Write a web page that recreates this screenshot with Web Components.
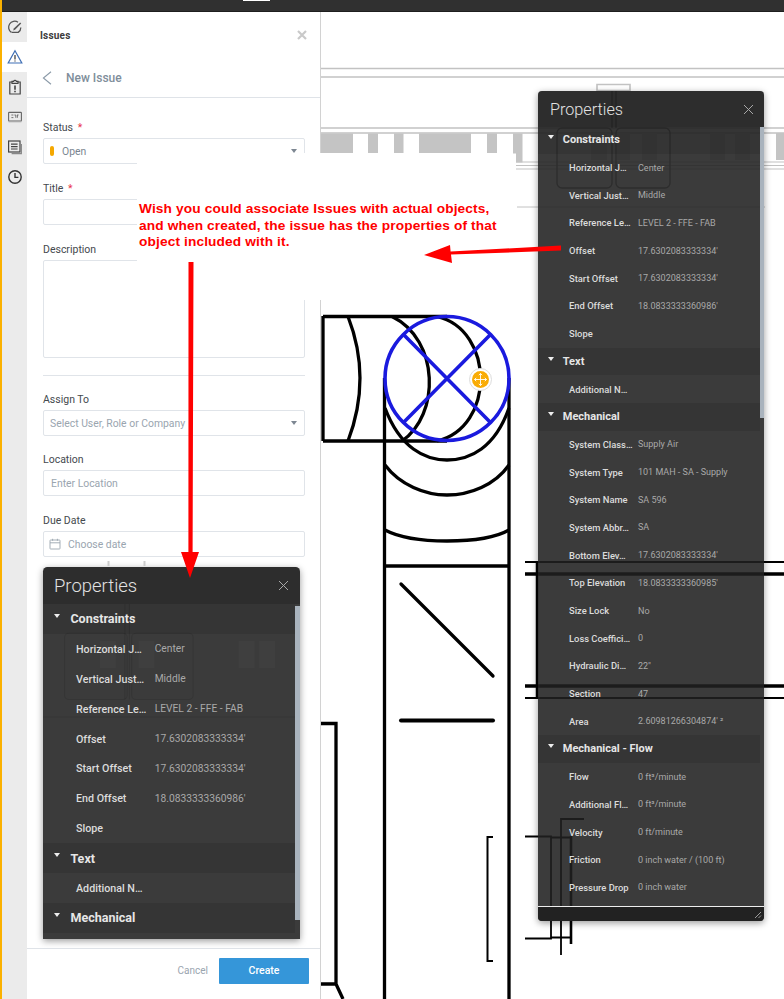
<!DOCTYPE html>
<html>
<head>
<meta charset="utf-8">
<title>Issues</title>
<style>
  html, body { margin: 0; padding: 0; background: #fff; }
  body { font-family: Roboto, "Liberation Sans", sans-serif; }
  #rightProps { left: 538px; top: 91px; width: 226px; height: 830px; font-size: 10px; --rowh: 27.7px; --headh: 36px; --shift: -1px; --rowpad: 31px; --headpad: 12px; }
  #leftProps { left: 43px; top: 567px; width: 257px; height: 372px; font-size: 11.4px; --rowh: 29.9px; --headh: 37px; --shift: 0px; --rowpad: 33px; --headpad: 11px; }
  #note { left: 137px; top: 153px; width: 376px; height: 147px; }
  #arrows { position: absolute; left: 0; top: 0; }
</style>
</head>
<body>

<viewer-shell>
  <side-rail slot="rail">
    <rail-icon>
      <svg viewBox="0 0 16 16" width="16" height="16" fill="none" stroke="#555" stroke-width="1.3"><path d="M4.4 13.4A6 6 0 1 1 11 3.2"/><path d="M4.6 13.4h6.6a6 6 0 0 0 2.6-5"/><path d="M6.8 9.6l6.4-6.2 1 1-6.2 6.4-1.8.6z" fill="#555" stroke="none"/></svg>
    </rail-icon>
    <rail-icon active>
      <svg viewBox="0 0 16 16" width="16" height="16" fill="none" stroke="#3f6fb5" stroke-width="1.2"><path d="M8 1.8L14.8 14H1.2z"/><path d="M8 6v4.4M8 11.4v1.2" stroke="#333"/></svg>
    </rail-icon>
    <rail-icon>
      <svg viewBox="0 0 16 16" width="16" height="16" fill="none" stroke="#444" stroke-width="1.2"><path d="M5 3H2.800v12h10.400V3H11"/><path d="M5 4.400V2.400h1.600a1.500 1.500 0 0 1 2.800 0H11v2z"/><path d="M8 6.400v4.400M8 11.800v1.400" stroke-width="1.600"/></svg>
    </rail-icon>
    <rail-icon>
      <svg viewBox="0 0 16 16" width="16" height="16" fill="none" stroke="#666" stroke-width="1.1"><rect x="1.600" y="3.400" width="12.800" height="8.600" rx=".6"/><path d="M1.600 12.600h12.800" stroke="#aaa" stroke-width="1.400"/><path d="M4.400 6h2M4.400 8.600h2M7.400 6h1.400v2.800M10.400 6v2.800M10 6h1.600" stroke-width=".9"/></svg>
    </rail-icon>
    <rail-icon>
      <svg viewBox="0 0 16 16" width="16" height="16" fill="none" stroke="#444" stroke-width="1.2"><rect x="1.600" y="2" width="11.400" height="11"/><path d="M4 5.200h6.600M4 7.600h6.600M4 10h6.600"/><path d="M14.400 5v9.600H4.600" stroke="#888" stroke-width="1.1"/></svg>
    </rail-icon>
    <rail-icon>
      <svg viewBox="0 0 16 16" width="16" height="16" fill="none" stroke="#333" stroke-width="1.4"><circle cx="8" cy="8" r="6.2"/><path d="M8 4v4.400h3.400"/></svg>
    </rail-icon>
  </side-rail>

  <issues-panel slot="panel">
    <form-field label="Status" required>
      <select-box><i class="dot" slot="lead"></i><span>Open</span></select-box>
    </form-field>
    <form-field label="Title" required><text-box></text-box></form-field>
    <form-field label="Description"><text-box tall></text-box></form-field>
    <hr-line></hr-line>
    <form-field label="Assign To" style="margin-bottom:16px">
      <select-box placeholder><span>Select User, Role or Company</span></select-box>
    </form-field>
    <form-field label="Location" style="margin-bottom:17px"><text-box>Enter Location</text-box></form-field>
    <form-field label="Due Date"><text-box calendar style="margin-top:1px">Choose date</text-box></form-field>
  </issues-panel>

  <cad-canvas slot="canvas"></cad-canvas>

  <red-note id="note" slot="float">Wish you could associate Issues with actual objects,<br>and when created, the issue has the properties of that<br>object included with it.</red-note>

  <prop-panel id="rightProps" slot="float" footer>
    <prop-section name="Constraints">
      <prop-row name="Horizontal J…" value="Center"></prop-row>
      <prop-row name="Vertical Just…" value="Middle"></prop-row>
      <prop-row name="Reference Le…" value="LEVEL 2 - FFE - FAB"></prop-row>
      <prop-row name="Offset" value="17.6302083333334'"></prop-row>
      <prop-row name="Start Offset" value="17.6302083333334'"></prop-row>
      <prop-row name="End Offset" value="18.0833333360986'"></prop-row>
      <prop-row name="Slope"></prop-row>
    </prop-section>
    <prop-section name="Text">
      <prop-row name="Additional N…"></prop-row>
    </prop-section>
    <prop-section name="Mechanical">
      <prop-row name="System Class…" value="Supply Air"></prop-row>
      <prop-row name="System Type" value="101 MAH - SA - Supply"></prop-row>
      <prop-row name="System Name" value="SA 596"></prop-row>
      <prop-row name="System Abbr…" value="SA"></prop-row>
      <prop-row name="Bottom Elev…" value="17.6302083333334'"></prop-row>
      <prop-row name="Top Elevation" value="18.0833333360985'"></prop-row>
      <prop-row name="Size Lock" value="No"></prop-row>
      <prop-row name="Loss Coeffici…" value="0"></prop-row>
      <prop-row name="Hydraulic Di…" value='22"'></prop-row>
      <prop-row name="Section" value="47"></prop-row>
      <prop-row name="Area" value="2.60981266304874' ²"></prop-row>
    </prop-section>
    <prop-section name="Mechanical - Flow">
      <prop-row name="Flow" value="0 ft³/minute"></prop-row>
      <prop-row name="Additional Fl…" value="0 ft³/minute"></prop-row>
      <prop-row name="Velocity" value="0 ft/minute"></prop-row>
      <prop-row name="Friction" value="0 inch water / (100 ft)"></prop-row>
      <prop-row name="Pressure Drop" value="0 inch water"></prop-row>
    </prop-section>
  </prop-panel>

  <prop-panel id="leftProps" slot="float">
    <!-- pasted copy of the panel, the drawing behind it still shows a little -->
    <svg slot="ghost" viewBox="0 0 226 344" preserveAspectRatio="none" width="100%" height="100%" fill="none" stroke="#000" stroke-opacity=".1">
      <path d="M0 116H226M76 0V98M72 0V98"/>
      <rect x="19" y="30" width="55" height="68" rx="4"/>
      <rect x="78" y="30" width="54" height="68" rx="4"/>
      <path d="M50 38h14v28H50zM84 38h14v28H84zM172 38h14v28h-14zM190 38h14v28h-14z" fill="#fff" fill-opacity=".025" stroke="none"/>
    </svg>
    <prop-section name="Constraints">
      <prop-row name="Horizontal J…" value="Center"></prop-row>
      <prop-row name="Vertical Just…" value="Middle"></prop-row>
      <prop-row name="Reference Le…" value="LEVEL 2 - FFE - FAB"></prop-row>
      <prop-row name="Offset" value="17.6302083333334'"></prop-row>
      <prop-row name="Start Offset" value="17.6302083333334'"></prop-row>
      <prop-row name="End Offset" value="18.0833333360986'"></prop-row>
      <prop-row name="Slope"></prop-row>
    </prop-section>
    <prop-section name="Text">
      <prop-row name="Additional N…"></prop-row>
    </prop-section>
    <prop-section name="Mechanical"></prop-section>
  </prop-panel>

  <!-- red markup drawn over everything -->
  <svg id="arrows" slot="float" width="784" height="999" viewBox="0 0 784 999">
    <g fill="#f00" stroke="none">
      <path d="M188.500 262h5L192.600 552H199L190 578 181 552h7.400z"/>
      <path d="M561 245.600v5L451 254.600 452 263 424 255 450 245l.6 6.600z"/>
    </g>
    <path d="M108.500 561v5M144.500 561v5" stroke="#ccc" stroke-width="2"/>
  </svg>
</viewer-shell>

<script>
// outer frame: top bar, rail + panel + drawing, floating windows on top
class ViewerShell extends HTMLElement {
  constructor() {
    super();
    this.attachShadow({mode: 'open'}).innerHTML = /*html*/`
      <style>
        :host { display: flex; position: relative; width: 784px; height: 999px; overflow: hidden; background: #fff; }
        .strip { width: 2px; flex: none; background: #fbb100; }
        .col { flex: 1; min-width: 0; display: flex; flex-direction: column; }
        .top { height: 11px; flex: none; background: #303030; border-bottom: 1px solid #1e1e1e; position: relative; }
        .tick { position: absolute; left: 241px; top: 0; width: 27px; height: 1px; background: #fff; }
        .main { flex: 1; display: flex; min-height: 0; }
      </style>
      <div class="strip"></div>
      <div class="col">
        <div class="top"><div class="tick"></div></div>
        <div class="main">
          <slot name="rail"></slot>
          <slot name="panel"></slot>
          <slot name="canvas"></slot>
        </div>
      </div>
      <slot name="float"></slot>
    `;
  }
}
customElements.define('viewer-shell', ViewerShell);

class SideRail extends HTMLElement {
  constructor() {
    super();
    this.attachShadow({mode: 'open'}).innerHTML = `
      <style>:host { display: block; flex: none; width: 25px; background: #ebebeb; }</style>
      <slot></slot>
    `;
  }
}
customElements.define('side-rail', SideRail);

class RailIcon extends HTMLElement {
  constructor() {
    super();
    this.attachShadow({mode: 'open'}).innerHTML = `
      <style>
        :host { display: flex; height: 30px; align-items: center; justify-content: center; }
        :host([active]) { background: #fff; }
      </style>
      <slot></slot>
    `;
  }
}
customElements.define('rail-icon', RailIcon);

class IssuesPanel extends HTMLElement {
  constructor() {
    super();
    this.attachShadow({mode: 'open'}).innerHTML = /*html*/`
      <style>
        :host { display: flex; flex-direction: column; flex: none; box-sizing: border-box; width: 294px;
                background: #fff; border-right: 1px solid #d2d2d2; color: #3f4449; font-size: 10.5px; }
        .head { height: 46px; flex: none; display: flex; align-items: center; justify-content: space-between; padding: 0 13px; }
        .head b { font-size: 10px; font-weight: 700; color: #3c3c3c; letter-spacing: .2px; }
        .sub { height: 39px; flex: none; display: flex; align-items: center; gap: 14px; padding-left: 15px; border-bottom: 1px solid #dfe3e8; }
        .sub b { font-size: 12px; font-weight: 500; color: #808e9b; }
        .form { flex: 1; min-height: 0; padding: 22px 15px 0 16px; overflow: hidden; }
        .foot { height: 51px; flex: none; box-sizing: border-box; border-top: 1px solid #dfe3e8; padding: 9px 11px 0 0;
                display: flex; justify-content: flex-end; align-items: flex-start; gap: 11px; }
        .cancel { line-height: 26px; color: #9aa5af; font-size: 10px; }
        .create { width: 90px; height: 26px; line-height: 26px; text-align: center; background: #3596d9; color: #fff;
                  font-size: 10.5px; font-weight: 500; border-radius: 1px; }
      </style>
      <div class="head"><b>Issues</b>
        <svg width="10" height="10" viewBox="0 0 10 10" stroke="#c9c9c9" stroke-width="2.2"><path d="M1 1l8 8M9 1l-8 8"/></svg>
      </div>
      <div class="sub">
        <svg width="10" height="14" viewBox="0 0 10 14" fill="none" stroke="#8b9aa8" stroke-width="1.1"><path d="M9 .8L1.400 7 9 13.200"/></svg>
        <b>New Issue</b>
      </div>
      <div class="form"><slot></slot></div>
      <div class="foot"><span class="cancel">Cancel</span><span class="create">Create</span></div>
    `;
  }
}
customElements.define('issues-panel', IssuesPanel);

class FormField extends HTMLElement {
  constructor() {
    super();
    this.attachShadow({mode: 'open'}).innerHTML = `
      <style>
        :host { display: block; margin-bottom: 17px; }
        .lab { height: 16px; line-height: 16px; margin-bottom: 2px; font-size: 10.5px; color: #44494e; }
        .star { color: #e8344a; margin-left: 2px; }
      </style>
      <div class="lab"></div>
      <slot></slot>
    `;
  }
  connectedCallback() {
    var lab = this.shadowRoot.querySelector('.lab');
    lab.textContent = this.getAttribute('label');
    if (this.hasAttribute('required')) {
      lab.innerHTML += ' <span class="star">*</span>';
    }
  }
}
customElements.define('form-field', FormField);

class SelectBox extends HTMLElement {
  constructor() {
    super();
    this.attachShadow({mode: 'open'}).innerHTML = `
      <style>
        :host { display: flex; align-items: center; box-sizing: border-box; height: 26px; padding: 0 7px 0 6px;
                border: 1px solid #e0e4e9; border-radius: 2px; font-size: 10.4px; color: #7a8590; }
        :host([placeholder]) { color: #9aa5af; }
        .txt { flex: 1; }
        .caret { width: 0; height: 0; border: 3.5px solid transparent; border-top: 4px solid #7d8792; border-bottom: 0; }
        ::slotted(.dot) { width: 4px; height: 10px; border-radius: 2px; background: #f5a800; margin-right: 8px; }
      </style>
      <slot name="lead"></slot>
      <div class="txt"><slot></slot></div>
      <div class="caret"></div>
    `;
  }
}
customElements.define('select-box', SelectBox);

class TextBox extends HTMLElement {
  constructor() {
    super();
    this.attachShadow({mode: 'open'}).innerHTML = `
      <style>
        :host { display: flex; align-items: center; gap: 7px; box-sizing: border-box; height: 26px; padding: 0 7px;
                border: 1px solid #e0e4e9; border-radius: 2px; font-size: 10.4px; color: #9aa5af; }
        :host([tall]) { height: 98px; }
        svg { display: none; }
        :host([calendar]) svg { display: block; }
        :host([calendar]) { padding-left: 5px; }
      </style>
      <svg width="12" height="12" viewBox="0 0 12 12" fill="none" stroke="#9aa5af" stroke-width=".9"><rect x="1" y="2" width="10" height="9" rx=".6"/><path d="M1 4.800h10M3.600.8v2M8.400.8v2"/></svg>
      <slot></slot>
    `;
  }
}
customElements.define('text-box', TextBox);

class HrLine extends HTMLElement {
  constructor() {
    super();
    this.attachShadow({mode: 'open'}).innerHTML = `
      <style>:host { display: block; height: 1px; background: #e0e4e9; margin-bottom: 16px; }</style>
    `;
  }
}
customElements.define('hr-line', HrLine);

// the duct drawing, page coordinates in the viewBox so they read off the screenshot
class CadCanvas extends HTMLElement {
  constructor() {
    super();
    this.attachShadow({mode: 'open'}).innerHTML = /*html*/`
      <style>
        :host { display: block; flex: 1; min-width: 0; background: #fff; }
        svg { display: block; }
      </style>
      <svg width="463" height="987" viewBox="321 12 463 987" fill="none">
        <g stroke="#c2c2c2" stroke-width="1.6">
          <path d="M321 68.500H784M321 77H784M321 128H784M321 133H784"/>
          <path d="M597 84.500h33v6h-33z"/>
          <path d="M516 162H784M516 165.500H784M516 169H784" stroke-width="1.200"/>
          <path d="M517 207H765" stroke-width="1"/>
        </g>
        <path d="M321 133.500h32v20h-32zM368 133.500h10v20h-10zM394 133.500h9.500v20H394zM419 133.500h52v20h-52zM487 133.500h10v20h-10zM513 133.500h9.500v20H522.500v9H516v-9h-3zM776 133h8v27h-8z" fill="#c4c4c4"/>
        <path d="M591 133h16v27h-16zM617 133h13v27h-13zM642 133h15v27h-15zM710 133h15v27h-15zM735 133h15v27h-15z" fill="#d8d8d8"/>
        <g stroke="#888" stroke-width="1.400">
          <rect x="557" y="128" width="55" height="60" rx="5"/>
          <rect x="616" y="128" width="54" height="60" rx="5"/>
          <path d="M612 91V128M616 91V128"/>
        </g>

        <g stroke="#000" stroke-width="3.300">
          <path d="M323 316.500H447M323 441H447M323 316V441"/>
          <path d="M348 316.500Q372 378 348 441"/>
          <path d="M392 316.500C440 340 440 415 402 441"/>
          <path d="M437 316.500C495 330 495 428 437 441"/>
          <path d="M384.500 378V999M509 378V999"/>
          <path d="M385 408C400 448 425 460 447 460C470 460 495 448 509 408"/>
          <path d="M385 465C400 485 425 495 447 495C470 495 495 485 509 465"/>
          <path d="M385 530C400 538 425 541 447 541C470 541 495 538 509 530"/>
          <path d="M384 566H509"/>
          <path d="M401 584L493 676" stroke-linecap="round"/>
          <path d="M401 720.500H493" stroke-width="4" stroke-linecap="round"/>
          <path d="M321 723.500H336V984H321M336 984L343 999"/>
          <path d="M493 837H487.500V961H493" stroke-width="2"/>
          <path d="M525 562H784" stroke-width="2"/>
          <path d="M525 574H784"/>
          <path d="M525 686H784"/>
          <path d="M525 698H784" stroke-width="2"/>
          <path d="M537 562V698" stroke-width="2.500"/>
          <path d="M525 836.500H551V938.500H525M551 837.500H571M551 937.500H572" stroke-width="1.800"/>
          <path d="M561 955V819H584" stroke-width="1.800"/>
          <path d="M571 836V944" stroke-width="2.600"/>
        </g>

        <g stroke="#1a1ade" stroke-width="3.600">
          <circle cx="447" cy="378.500" r="62"/>
          <path d="M404 335L490 422M490 335L404 422"/>
        </g>

        <circle cx="480.500" cy="379.500" r="11" fill="#fff" stroke="#ddd"/>
        <circle cx="480.500" cy="379.500" r="8.500" fill="#f9ac06"/>
        <path d="M480.500 373.500v12M474.500 379.500h12M478.800 375.200l1.700-1.700 1.700 1.700M478.800 383.800l1.700 1.700 1.700-1.700M476.200 377.800l-1.700 1.700 1.700 1.700M484.800 377.800l1.700 1.700-1.700 1.700" stroke="#fff" stroke-width=".9"/>
      </svg>
    `;
  }
}
customElements.define('cad-canvas', CadCanvas);

class RedNote extends HTMLElement {
  constructor() {
    super();
    this.attachShadow({mode: 'open'}).innerHTML = `
      <style>
        :host { display: block; position: absolute; box-sizing: border-box; background: #fff; padding: 48px 0 0 2px;
                font: bold 13.7px/16.5px "Liberation Sans", Arial, sans-serif; letter-spacing: .13px; color: #f00; white-space: nowrap; }
      </style>
      <slot></slot>
    `;
  }
}
customElements.define('red-note', RedNote);

class PropPanel extends HTMLElement {
  constructor() {
    super();
    this.attachShadow({mode: 'open'}).innerHTML = /*html*/`
      <style>
        :host { display: flex; flex-direction: column; position: absolute; box-sizing: border-box; border-radius: .4em .4em 0 0;
                background: rgba(32,32,32,.88); box-shadow: 0 2px 7px rgba(0,0,0,.4); color: #ddd; overflow: hidden; }
        :host([footer]) { border-radius: .4em; }
        .head { height: var(--headh); flex: none; box-sizing: border-box; display: flex; align-items: center; justify-content: space-between;
                padding: 0 1em 0 var(--headpad); background: rgba(10,10,10,.28); }
        .head span { font-size: 1.62em; font-weight: 300; color: #e2e2e2; }
        .body { flex: 1; min-height: 0; position: relative; overflow: hidden; }
        .inner { margin-top: var(--shift); padding-right: .4em; }
        .bar { position: absolute; right: 0; top: 0; width: .4em; height: 291px; background: #a9b3bd; }
        :host(#leftProps) .bar { height: 314px; top: 2px; }
        .ghost { position: absolute; inset: 0; pointer-events: none; }
        .foot { display: none; height: 1.4em; flex: none; background: #222; border-top: 1px solid #eee; position: relative; }
        :host([footer]) .foot { display: block; }
        .foot svg { position: absolute; right: 2px; bottom: 2px; }
      </style>
      <div class="head"><span>Properties</span>
        <svg width="11" height="11" viewBox="0 0 11 11" stroke="#a8a8a8" stroke-width="1"><path d="M1 1l9 9M10 1l-9 9"/></svg>
      </div>
      <div class="body">
        <div class="ghost"><slot name="ghost"></slot></div>
        <div class="inner"><slot></slot></div>
        <div class="bar"></div>
      </div>
      <div class="foot">
        <svg width="8" height="8" viewBox="0 0 8 8" stroke="#aaa" stroke-width=".9"><path d="M1 7l6-6M4.500 7L7 4.500"/></svg>
      </div>
    `;
  }
}
customElements.define('prop-panel', PropPanel);

class PropSection extends HTMLElement {
  constructor() {
    super();
    this.attachShadow({mode: 'open'}).innerHTML = `
      <style>
        :host { display: block; }
        .band { height: var(--rowh); display: flex; align-items: center; background: rgba(0,0,0,.09); }
        .tri { width: 0; height: 0; margin: -.5em 0 0 1em; border: .35em solid transparent; border-top: .4em solid #eee; border-bottom: 0; }
        b { margin-left: .8em; font-size: 1.1em; font-weight: 700; color: #e6e6e6; }
      </style>
      <div class="band"><div class="tri"></div><b></b></div>
      <slot></slot>
    `;
  }
  connectedCallback() {
    this.shadowRoot.querySelector('b').textContent = this.getAttribute('name');
  }
}
customElements.define('prop-section', PropSection);

class PropRow extends HTMLElement {
  constructor() {
    super();
    this.attachShadow({mode: 'open'}).innerHTML = `
      <style>
        :host { display: flex; align-items: center; height: var(--rowh); padding-left: var(--rowpad); white-space: nowrap; }
        .n { width: 6.9em; flex: none; color: #dcdcdc; }
        .n span { font-size: .94em; font-weight: 500; }
        .v { font-size: .9em; color: #a9a9a9; }
      </style>
      <span class="n"><span></span></span><span class="v"></span>
    `;
  }
  connectedCallback() {
    this.shadowRoot.querySelector('.n span').textContent = this.getAttribute('name');
    this.shadowRoot.querySelector('.v').textContent = this.getAttribute('value') || '';
  }
}
customElements.define('prop-row', PropRow);
</script>
</body>
</html>
